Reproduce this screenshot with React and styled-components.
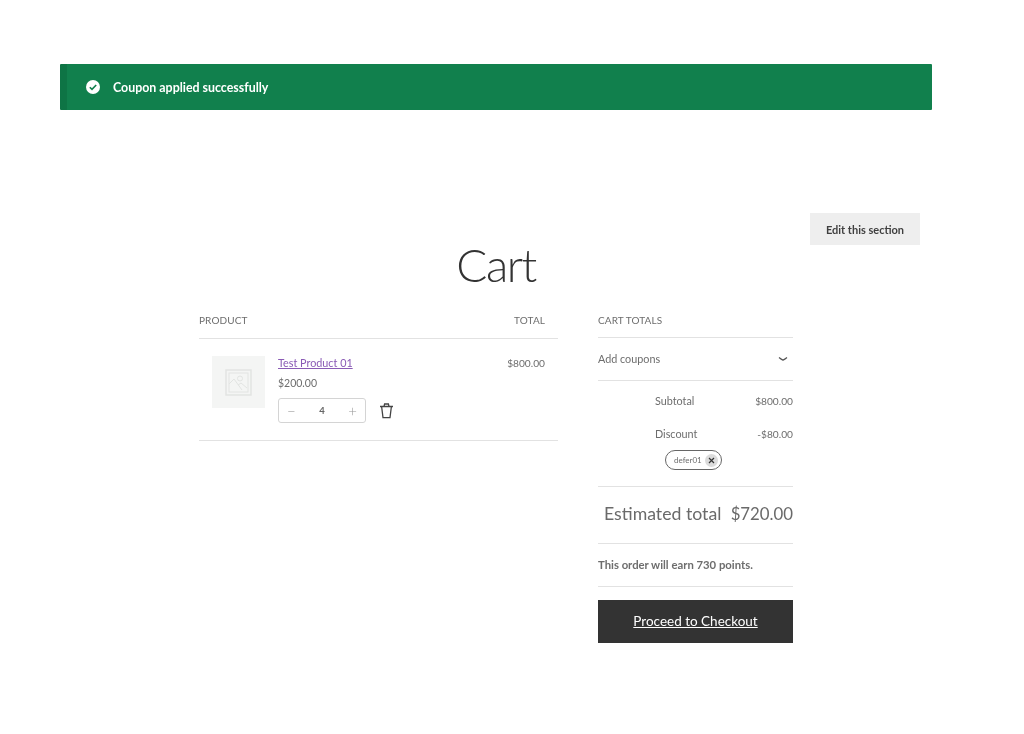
import React from 'react'
import styled, { createGlobalStyle } from 'styled-components'

const GlobalStyle = createGlobalStyle`
  * { box-sizing: border-box; }
  body {
    margin: 0;
    background: #fff;
    font-family: "Lato", "Open Sans", sans-serif;
    color: #6d6d6d;
  }
`

const Page = styled.div`
  width: 1024px;
  height: 734px;
  padding: 64px 92px 0 60px;
  overflow: hidden;
  will-change: transform;
`

const Notice = styled.div`
  height: 46px;
  display: flex;
  align-items: center;
  gap: 13px;
  padding-left: 19px;
  background: #11804d;
  border-left: 7px solid #0e7445;
  border-radius: 1px;
  color: #fff;
  font-size: 12.4px;
  font-weight: 700;
`

const EditRow = styled.div`
  display: flex;
  justify-content: flex-end;
  padding: 103px 12px 0 0;
`

const EditButton = styled.button`
  width: 110px;
  height: 32px;
  border: 0;
  background: #eeeeee;
  color: #3f3f3f;
  font: 700 11px "Lato", sans-serif;
`

const Title = styled.h1`
  margin: 0;
  height: 62px;
  text-align: center;
  font-size: 46px;
  line-height: 40px;
  font-weight: 300;
  letter-spacing: -1.5px;
  color: #333;
`

const Columns = styled.div`
  display: grid;
  grid-template-columns: 359px 195px;
  column-gap: 40px;
  width: 594px;
  margin-left: 139px;
  padding-top: 4px;
`

const HeadRow = styled.div`
  display: flex;
  justify-content: space-between;
  height: ${p => p.$height}px;
  padding: 2px ${p => p.$inset || 0}px 0 0;
  border-bottom: 1px solid #e2e2e2;
  font-size: 10px;
  line-height: 15px;
  letter-spacing: 0.1px;
`

const ProductRow = styled.div`
  display: grid;
  grid-template-columns: 53px 1fr auto;
  column-gap: 13px;
  height: 102px;
  padding: 17px 13px 0 13px;
  border-bottom: 1px solid #e2e2e2;
`

const Thumb = styled.div`
  width: 53px;
  height: 52px;
  display: flex;
  align-items: center;
  justify-content: center;
  background: #f4f5f4;
`

const ProductInfo = styled.div`
  display: flex;
  flex-direction: column;
  align-items: flex-start;
  font-size: 10.5px;
`

const ProductLink = styled.a`
  color: #8a5ab5;
  font-size: 10.8px;
  text-decoration: underline;
  line-height: 14px;
  margin-bottom: 6px;
`

const Price = styled.span`
  line-height: 14px;
  margin-bottom: 8px;
`

const QtyRow = styled.div`
  display: flex;
  align-items: center;
  gap: 13px;
`

const Qty = styled.div`
  width: 88px;
  height: 25px;
  display: flex;
  align-items: center;
  justify-content: space-between;
  padding: 0 8px;
  border: 1px solid #d4d4d4;
  border-radius: 3px;
  font-size: 9.5px;
  font-weight: 700;
  color: #666;
`

const QtyStep = styled.span`
  font-size: 15px;
  font-weight: 300;
  color: #999;
`

const Amount = styled.span`
  font-size: 10.2px;
  line-height: 14px;
`

const CouponToggle = styled.div`
  height: 43px;
  display: flex;
  align-items: center;
  justify-content: space-between;
  padding: 0 5px 1px 0;
  border-bottom: 1px solid #e2e2e2;
  font-size: 10.8px;
`

const Totals = styled.div`
  height: 106px;
  padding-top: 13px;
  border-bottom: 1px solid #e2e2e2;
`

const TotalLine = styled.div`
  display: flex;
  justify-content: space-between;
  padding-left: 57px;
  height: 33px;
  font-size: 10.8px;
  line-height: 14px;
`

const CouponChip = styled.div`
  width: 57px;
  height: 20px;
  margin: -10px 0 0 67px;
  display: flex;
  align-items: center;
  justify-content: space-between;
  padding: 0 3px 0 8px;
  border: 1px solid #666;
  border-radius: 10px;
  font-size: 8px;
`

const ChipClose = styled.span`
  width: 13px;
  height: 13px;
  display: flex;
  align-items: center;
  justify-content: center;
  border-radius: 50%;
  background: #dcdcdc;
  color: #333;
`

const GrandTotal = styled.div`
  height: 57px;
  display: flex;
  align-items: center;
  justify-content: space-between;
  padding: 0 0 3px 6px;
  border-bottom: 1px solid #e2e2e2;
  font-size: 17.7px;
  color: #6a6a6a;
`

const GrandAmount = styled.span`
  font-size: 16.8px;
`

const Points = styled.div`
  height: 43px;
  display: flex;
  align-items: center;
  padding-bottom: 1px;
  border-bottom: 1px solid #e2e2e2;
  font-size: 11.3px;
  font-weight: 700;
`

const Checkout = styled.a`
  height: 43px;
  margin-top: 13px;
  padding-bottom: 1px;
  display: flex;
  align-items: center;
  justify-content: center;
  background: #333;
  color: #fff;
  font-size: 13.5px;
  text-decoration: underline;
`

function CheckIcon() {
  return (
    <svg width="14" height="14" viewBox="0 0 14 14">
      <circle cx="7" cy="7" r="7" fill="#fff" />
      <path d="M3.8 7.2l2.2 2.2 4.2-4.4" fill="none" stroke="#11804d" strokeWidth="1.6" />
    </svg>
  )
}

function PlaceholderIcon() {
  return (
    <svg width="27" height="27" viewBox="0 0 27 27" fill="none" stroke="#e2e4e2">
      <rect x="1" y="1" width="25" height="25" strokeWidth="1.5" />
      <rect x="4" y="4" width="19" height="19" strokeWidth="1" />
      <circle cx="15" cy="9.5" r="2.5" />
      <path d="M4 15l5-5 8 11M13 16l3-2 6 5" />
    </svg>
  )
}

function TrashIcon() {
  return (
    <svg width="15" height="16" viewBox="0 0 15 16" fill="none" stroke="#444" strokeWidth="1.3">
      <path d="M1 3.5h13M5 3.3L5.6 1h3.8l.6 2.3M2.6 3.5L4 14.6h7l1.4-11.1" />
    </svg>
  )
}

function ChevronIcon() {
  return (
    <svg width="10" height="6" viewBox="0 0 10 6" fill="none" stroke="#555" strokeWidth="1.2">
      <path d="M1 1.5c1.5 1.2 2.6 2 4 2.6 1.4-.6 2.5-1.4 4-2.6" />
    </svg>
  )
}

export default function App() {
  return (
    <Page>
      <GlobalStyle />
      <Notice>
        <CheckIcon />
        Coupon applied successfully
      </Notice>
      <EditRow>
        <EditButton>Edit this section</EditButton>
      </EditRow>
      <Title>Cart</Title>
      <Columns>
        <div>
          <HeadRow $height={28} $inset={13}>
            <span>PRODUCT</span>
            <span>TOTAL</span>
          </HeadRow>
          <ProductRow>
            <Thumb>
              <PlaceholderIcon />
            </Thumb>
            <ProductInfo>
              <ProductLink href="#">Test Product 01</ProductLink>
              <Price>$200.00</Price>
              <QtyRow>
                <Qty>
                  <QtyStep>−</QtyStep>
                  4
                  <QtyStep>+</QtyStep>
                </Qty>
                <TrashIcon />
              </QtyRow>
            </ProductInfo>
            <Amount>$800.00</Amount>
          </ProductRow>
        </div>
        <div>
          <HeadRow $height={27}>
            <span>CART TOTALS</span>
          </HeadRow>
          <CouponToggle>
            Add coupons
            <ChevronIcon />
          </CouponToggle>
          <Totals>
            <TotalLine>
              <span>Subtotal</span>
              <Amount>$800.00</Amount>
            </TotalLine>
            <TotalLine>
              <span>Discount</span>
              <Amount>-$80.00</Amount>
            </TotalLine>
            <CouponChip>
              defer01
              <ChipClose>
                <svg width="7" height="7" viewBox="0 0 7 7" stroke="#333" strokeWidth="1.2">
                  <path d="M1 1l5 5M6 1L1 6" />
                </svg>
              </ChipClose>
            </CouponChip>
          </Totals>
          <GrandTotal>
            <span>Estimated total</span>
            <GrandAmount>$720.00</GrandAmount>
          </GrandTotal>
          <Points>This order will earn 730 points.</Points>
          <Checkout href="#">Proceed to Checkout</Checkout>
        </div>
      </Columns>
    </Page>
  )
}
